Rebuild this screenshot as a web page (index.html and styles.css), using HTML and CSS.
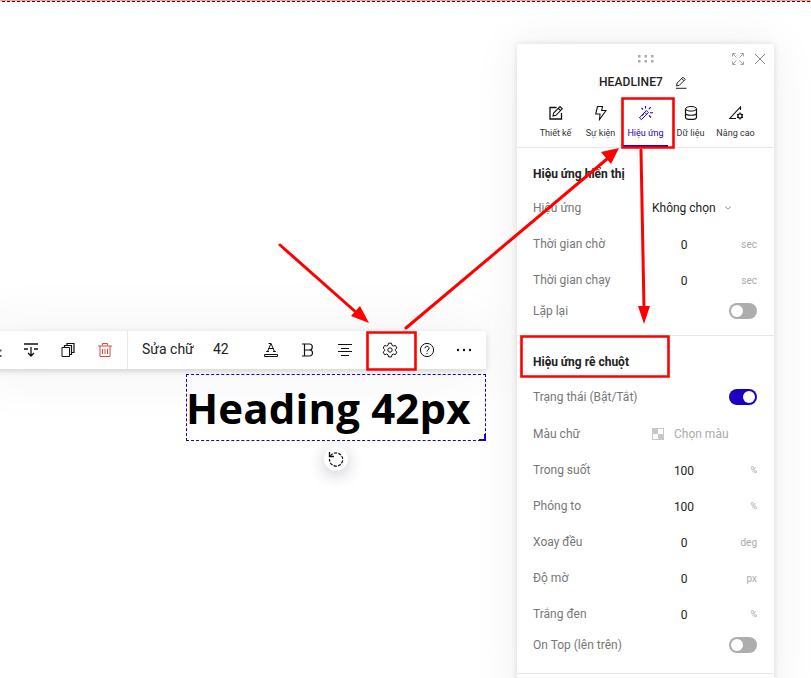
FILE: index.html
```html
<!DOCTYPE html>
<html lang="vi">
<head>
<meta charset="utf-8">
<title>Hiệu ứng rê chuột</title>
<link rel="stylesheet" href="styles.css">
</head>
<body>
<main class="canvas">
  <div class="section-edge"></div>

  <div class="toolbar">
    <div class="tools tools-left">
      <span class="tool clipped"><svg width="16" height="16" viewBox="0 0 16 16"><path d="M1 8.500h14.500M1 14h14.500" stroke-width="2"/></svg></span>
      <span class="tool"><svg width="16" height="16" viewBox="0 0 16 16"><path d="M1 2h14M1 7h4M11 7h4M8 5v9M5 11l3 3 3-3" stroke-width="1.3"/></svg></span>
      <span class="tool"><svg width="16" height="16" viewBox="0 0 16 16"><path d="M2 5.500h7.500v9H2z"/><path d="M4.500 5V3.500h7v9H10M7 3V1.500h7v9H12" stroke-width="1.200"/></svg></span>
      <span class="tool danger"><svg width="16" height="16" viewBox="0 0 16 16"><path d="M1 4h14M3 4v10.500h10V4M5.500 3.500v-2h5v2M5.500 7v5M8 7v5M10.500 7v5"/></svg></span>
    </div>
    <div class="tools tools-text">
      <span class="font-name">Sửa chữ</span>
      <span class="font-size">42</span>
      <span class="tool"><svg width="16" height="16" viewBox="0 0 16 16"><path d="M4.500 9.500 8 1.500l3.500 8M5.500 6.500h5M3.200 9.500H6M10 9.500h2.800M5.500 1.500H8"/><path d="M1.500 12.500h13v2h-13z"/></svg></span>
      <span class="tool"><svg width="16" height="16" viewBox="0 0 16 16"><path d="M2 2h7.300a3 3 0 0 1 0 6H4.500M4.500 2v12M9.500 8a3 3 0 0 1 0 6H2" stroke-width="1.200"/></svg></span>
      <span class="tool"><svg width="16" height="16" viewBox="0 0 16 16"><path d="M1 2.500h14M4 6.500h8M1 9.500h14M4 13.500h8"/></svg></span>
      <span class="tool settings"><svg width="16" height="16" viewBox="0 0 16 16"><path d="M6.500 1.200h3l.5 2.100 1.300.8 2.100-.7 1.500 2.600-1.600 1.400v1.300l1.600 1.400-1.500 2.600-2.100-.7-1.300.8-.5 2.100h-3L6 12.800l-1.300-.8-2.100.7-1.500-2.600 1.600-1.400V7.400L1.100 6l1.500-2.600 2.100.7L6 3.300z"/><circle cx="8" cy="8" r="2.200"/></svg></span>
      <span class="tool"><svg width="16" height="16" viewBox="0 0 16 16"><circle cx="8" cy="8" r="6.600"/><path d="M6 6.300a2 2 0 1 1 3 1.700c-.7.500-1 .7-1 1.700M8 11v1.200"/></svg></span>
      <span class="tool"><svg class="solid" width="16" height="16" viewBox="0 0 16 16"><circle cx="2" cy="8" r="1.200"/><circle cx="8" cy="8" r="1.200"/><circle cx="14" cy="8" r="1.200"/></svg></span>
    </div>
  </div>

  <h1 class="headline">Heading 42px<span class="resize"></span></h1>
  <div class="rotate"><svg width="16" height="16" viewBox="0 0 16 16"><path d="M2.500 5A6.600 6.600 0 1 1 1.500 8" stroke-dasharray="3.200 1.200" stroke-width="1.200"/><path d="M1.500 1v4.500H6" stroke-width="1.300"/></svg></div>

  <aside class="panel">
    <header class="panel-head">
      <div class="panel-bar">
        <svg class="grip" width="16" height="8" viewBox="0 0 16 8"><path d="M0 0h2.500v2.500H0zM6.500 0H9v2.500H6.500zM13 0h2.500v2.500H13zM0 5h2.500v2.500H0zM6.500 5H9v2.500H6.500zM13 5h2.500v2.500H13z"/></svg>
        <svg class="expand" width="12" height="12" viewBox="0 0 12 12"><path d="M.5 3.500v-3h3M8.500.5h3v3M11.500 8.500v3h-3M3.500 11.500h-3v-3M1 1l3.500 3.500M11 1 7.500 4.500M11 11 7.500 7.500M1 11l3.500-3.500"/></svg>
        <svg class="close" width="12" height="12" viewBox="0 0 12 12"><path d="m1 1 10 10M11 1 1 11"/></svg>
      </div>
      <div class="panel-title"><span>HEADLINE7</span><svg width="12" height="13" viewBox="0 0 12 13"><path d="M1 12.300h10.500M1.500 10l.7-3L8 1.200l2.200 2.200L4.500 9.200zM6.700 2.500l2.200 2.200"/></svg></div>
      <nav class="tabs">
        <span class="tab design"><svg width="16" height="16" viewBox="0 0 16 16"><path d="M8.500 2.500H2v11.500h11.500V8" stroke-width="1.300"/><path d="m5 11 .6-3 6.400-6.500 2.300 2.300-6.400 6.500zM10.300 3.300l2.200 2.200" stroke-width="1.100"/></svg>Thiết kế</span>
        <span class="tab event"><svg width="16" height="16" viewBox="0 0 16 16"><path d="M4.500 1.500h5L8.700 5.500H13L6.500 14.500 7 9H2.700z" stroke-width="1.100"/></svg>Sự kiện</span>
        <span class="tab effect active"><svg width="16" height="16" viewBox="0 0 16 16"><path d="M1.500 12.800 8.300 5.500l2 2-6.800 7.200zM6.700 7.300l2 2M4 10.800l2-2"/><path d="M7.500 1v2.500M12.800 2.200l-2 2M12 7.800h3M11 10.500l2 2M3.500 3l1.500 1.500" stroke-width="1.100"/></svg>Hiệu ứng</span>
        <span class="tab data"><svg width="16" height="16" viewBox="0 0 16 16"><ellipse cx="8" cy="3.800" rx="5.500" ry="2.300"/><path d="M2.500 3.800v8.400c0 3 11 3 11 0V3.800M2.500 8c0 3 11 3 11 0" stroke-width="1.200"/></svg>Dữ liệu</span>
        <span class="tab more"><svg width="16" height="16" viewBox="0 0 16 16"><path d="M12.500 5V1.800L1.800 13.500H8" stroke-width="1.100"/><circle cx="12" cy="11" r="2.100" stroke-width="1.300"/><path d="M12 7.500v1.200M12 13.300v1.200M9 9.300l1 .5M14 12.200l1 .5M15 9.300l-1 .5M10 12.200l-1 .5" stroke-width="1.300"/></svg>Nâng cao</span>
      </nav>
    </header>

    <section class="group display">
      <h2>Hiệu ứng hiển thị</h2>
      <div class="row"><span>Hiệu ứng</span><span class="select">Không chọn<svg width="8" height="6" viewBox="0 0 8 6"><path d="m1 1.500 3 2.500 3-2.500"/></svg></span></div>
      <div class="row"><span>Thời gian chờ</span><b>0</b><i>sec</i></div>
      <div class="row"><span>Thời gian chạy</span><b>0</b><i>sec</i></div>
      <div class="row short"><span>Lặp lại</span><em class="switch"></em></div>
    </section>

    <section class="group hover">
      <h2>Hiệu ứng rê chuột</h2>
      <div class="row"><span>Trạng thái (Bật/Tắt)</span><em class="switch on"></em></div>
      <div class="row color"><span>Màu chữ</span><span class="picker"><span class="swatch"></span>Chọn màu</span></div>
      <div class="row"><span>Trong suốt</span><b>100</b><i class="pct">%</i></div>
      <div class="row"><span>Phóng to</span><b>100</b><i class="pct">%</i></div>
      <div class="row"><span>Xoay đều</span><b>0</b><i>deg</i></div>
      <div class="row"><span>Độ mờ</span><b>0</b><i>px</i></div>
      <div class="row"><span>Trắng đen</span><b>0</b><i class="pct">%</i></div>
      <div class="row short"><span>On Top (lên trên)</span><em class="switch"></em></div>
    </section>
  </aside>

  <svg class="marks" width="811" height="678" viewBox="0 0 811 678">
    <path d="M622.500 98.500h51v49h-51zM367.500 332.500h48v37h-48zM521.500 336.500h147v40h-147z"/>
    <path class="line" d="m280 245 78 69M406 328l201-169M641 150l3 158"/>
    <path class="head" d="m369 323-18-7 9-10zM619 148l-8 16-10-12zM644 324l-6-18h12z"/>
  </svg>
</main>
</body>
</html>
```
FILE: styles.css
```css
* { box-sizing: border-box; }
body { margin: 0; font-family: Roboto, "Liberation Sans", sans-serif; color: #222; }
svg { display: block; fill: none; stroke: currentColor; flex: none; }
.canvas { position: relative; width: 811px; height: 678px; overflow: hidden; background: #fff; }
.section-edge {
  height: 2px;
  background: repeating-linear-gradient(90deg, #ffe3bd 0 2px, #1c00c2 2px 5px) 0 1px / 100% 1px no-repeat, #ffb04d;
}

.toolbar {
  position: absolute; left: -25px; top: 331px; width: 511px; height: 38px;
  display: flex; background: #fff; border-radius: 2px;
  box-shadow: 0 2px 6px rgba(0,0,0,.16), 0 0 60px rgba(0,0,0,.07);
}
.tools { display: flex; align-items: center; }
.tools-left { width: 153px; border-right: 1px solid #e8e8e8; }
.tools-text { flex: 1; }
.tool { display: flex; justify-content: center; width: 37px; color: #111; }
.clipped { color: #555; }
.danger { color: #e4463f; }
.font-name { width: 71px; padding: 0 0 2px 14px; font-size: 14px; white-space: nowrap; }
.font-size { width: 53px; padding: 0 0 2px 14px; font-size: 14px; }
.settings { margin-left: 8px; }
.solid { fill: currentColor; stroke: none; }

.headline {
  position: absolute; left: 186px; top: 374px; width: 300px; height: 67px; margin: 0;
  border: 1px dashed #1c00c2; text-indent: -1px; letter-spacing: .15px;
  font: 700 42px/66px "Open Sans", sans-serif; color: #000; white-space: nowrap;
}
.resize {
  position: absolute; right: -1px; bottom: -1px; width: 7px; height: 7px;
  border: solid #1c00c2; border-width: 0 2px 2px 0;
}
.rotate {
  position: absolute; left: 324px; top: 447px; width: 24px; height: 24px;
  display: flex; align-items: center; justify-content: center;
  background: #fff; border-radius: 50%; color: #111;
  box-shadow: 0 4px 16px rgba(30,40,60,.25);
}

.panel {
  position: absolute; left: 517px; top: 44px; width: 257px; height: 660px;
  background: #fff; border-radius: 2px;
  box-shadow: 0 0 6px rgba(0,0,0,.12), 0 0 48px rgba(0,0,0,.07);
}
.panel-head { height: 104px; border-bottom: 1px solid #e8e8e8; }
.panel-bar { display: flex; align-items: center; height: 30px; padding: 0 8px 0 121px; color: #a3a3a3; }
.grip { fill: #aaa; stroke: none; margin-top: -1px; }
.expand { margin-left: auto; }
.close { margin-left: 10px; color: #888; }
.panel-title { display: flex; align-items: center; height: 16px; padding-left: 82px; gap: 12px; font-size: 12px; font-weight: 500; letter-spacing: .1px; }
.tabs { display: flex; height: 57px; padding: 15px 0 0 16px; }
.tab { display: flex; flex-direction: column; align-items: center; gap: 7px; width: 45px; font-size: 9px; line-height: 11px; white-space: nowrap; color: #333; }
.tab svg { color: #111; }
.active, .active svg { color: #1c00c2; }
.active { height: 42px; border-bottom: 2px solid #1c00c2; }

.group { padding: 8px 17px 11px 16px; border-bottom: 1px solid #e8e8e8; }
.hover { padding-bottom: 15px; }
.group h2 { margin: 0; height: 34px; font-size: 12px; line-height: 36px; font-weight: 700; color: #222; }
.hover h2 { height: 35px; line-height: 37px; }
.row { display: grid; grid-template-columns: 119px 64px 1fr; align-items: center; height: 36px; font-size: 12px; color: #777; white-space: nowrap; }
.row.color { height: 37px; }
.row.short { height: 26px; }
.row b { padding-top: 2px; font-weight: 400; color: #222; text-align: center; }
.row i { font-style: normal; font-size: 10px; color: #aaa; text-align: right; }
.row .pct { font-size: 9px; padding-bottom: 1px; }
.select { display: flex; align-items: center; gap: 8px; color: #222; }
.select svg { color: #999; }
.picker { display: flex; align-items: center; gap: 10px; color: #aaa; }
.swatch { flex: none; width: 12px; height: 12px; border: 1px solid #c8c8c8; background: conic-gradient(#fff 25%, #c8c8c8 0 50%, #fff 0 75%, #c8c8c8 0); }
.switch { grid-column: 3; justify-self: end; display: flex; align-items: center; width: 28px; height: 16px; padding: 0 2px; border-radius: 8px; background: #adadad; }
.switch::before { content: ""; width: 12px; height: 12px; border-radius: 50%; background: #fff; }
.on { justify-content: flex-end; background: #1c00c2; }

.marks { position: absolute; left: 0; top: 0; color: #f00; stroke-width: 2.600; }
.line { stroke-width: 3; stroke-linecap: round; }
.head { fill: currentColor; stroke: none; }
```
